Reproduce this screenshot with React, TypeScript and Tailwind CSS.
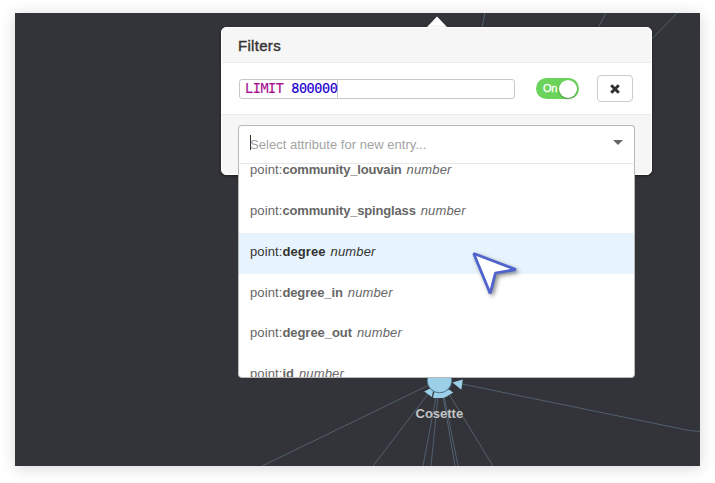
import { ReactNode } from "react";

type Attribute = { name: string; tracking: string; selected?: boolean };

const attributes: Attribute[] = [
  { name: "community_louvain", tracking: "tracking-[-0.17px]" },
  { name: "community_spinglass", tracking: "tracking-[-0.17px]" },
  { name: "degree", tracking: "tracking-[0.08px]", selected: true },
  { name: "degree_in", tracking: "tracking-[-0.12px]" },
  { name: "degree_out", tracking: "tracking-[-0.05px]" },
  { name: "id", tracking: "tracking-normal" },
];

function GraphCanvas() {
  return (
    <svg className="absolute inset-0" width="685" height="453" viewBox="15 13 685 453" fill="none">
      <g stroke="#51606f" strokeWidth="1">
        <path d="M427 386 L262 466" />
        <path d="M428 394 L373 466" />
        <path d="M436 397 L423 466" />
        <path d="M438 397 L431 466" />
        <path d="M443 396 L455 466" />
        <path d="M444 396 L458 466" />
        <path d="M449 394 L493 466" />
        <path d="M462 384 L682 429 Q690 431 700 431.5" />
        <path d="M485 13 L482 28" />
        <path d="M606 13 L598 28" />
        <path d="M677 13 L651 40" />
      </g>
      <g fill="#9bd0e8">
        <path d="M452.5 382.5 L462.8 379.5 L461.3 389.8 Z" />
        <path d="M424.2 391.5 L431 388 L434 391 L432 397 Z" />
        <path d="M432.5 397 L435 391 L445 391 L448 396 L443 398 L434 398 Z" />
        <path d="M444 391 L449 389.5 L453.2 392.5 L446.5 396.5 Z" />
        <path d="M433.5 391 L432.5 397" stroke="#333439" />
        <circle cx="439.5" cy="380.5" r="12.3" stroke="#4a7185" strokeWidth="1" />
      </g>
    </svg>
  );
}

function Row({ children }: { children: ReactNode }) {
  return (
    <div className="flex h-[53px] items-center border-y border-[#ebebeb] bg-white pl-[17px]">{children}</div>
  );
}

function Toggle() {
  return (
    <div className="ml-[21px] flex h-[21px] w-[43px] items-center justify-between rounded-full bg-[#69d35a] pr-[2px] pl-[7px]">
      <span className="text-[11px] tracking-[-0.2px] text-white [-webkit-text-stroke:0.3px_white]">On</span>
      <span className="size-[18px] shrink-0 rounded-full bg-white shadow-[0_1px_2px_rgba(0,0,0,0.35)]" />
    </div>
  );
}

function AttributeSelect() {
  return (
    <div className="relative h-[38px] w-[397px] rounded-t-[4px] border border-b-0 border-[#b8b8b8] bg-white">
      <div className="flex h-full items-center justify-between pr-[11px] pl-[11px]">
        <span className="flex items-center text-[13px] text-[#a3a3a3]">
          <span className="-mt-[4px] -mr-px h-[15px] w-px bg-[#333]" />
          <span className="tracking-[0.03px]">Select attribute for new entry...</span>
        </span>
        <span className="-mt-[5px] border-x-[5.5px] border-t-[5.5px] border-x-transparent border-t-[#666]" />
      </div>
      <div className="absolute top-[37px] -left-px h-[215px] w-[397px] overflow-hidden rounded-b-[4px] border border-[#b8b8b8] border-t-[#e7e7e7] bg-white">
        <ul className="-mt-[12.4px]">
          {attributes.map((a) => (
            <li
              key={a.name}
              className={
                "flex h-[40.8px] items-center pb-[4px] pl-[11px] text-[13px] whitespace-pre " +
                (a.selected ? "bg-[#e8f4fd] text-[#333]" : "text-[#666]")
              }
            >
              <span className="tracking-[0.1px]">point:</span>
              <b className={a.tracking}>{a.name}</b>
              <i className="ml-[5px] tracking-[0.15px]">number</i>
            </li>
          ))}
        </ul>
      </div>
    </div>
  );
}

export default function App() {
  return (
    <div className="h-[483px] w-[715px] overflow-hidden bg-white pt-[13px] pl-[15px] font-['Liberation_Sans',Arial,sans-serif]">
      <div className="relative h-[453px] w-[685px] bg-[#333439] shadow-[0_2px_14px_rgba(0,0,0,0.16)]">
        <GraphCanvas />
        <span className="absolute top-[393px] left-[400.5px] text-[13px] leading-[15px] font-bold text-[#c4c4c4]">
          Cosette
        </span>
        <svg className="absolute top-[3px] left-[411px]" width="22" height="12">
          <path d="M0 12 L11 0.5 L22 12 Z" fill="#fff" />
        </svg>
        <section className="absolute top-[14px] left-[206px] h-[148px] w-[431px] rounded-[5px] border border-white bg-[#f6f6f6] shadow-[0_1px_3px_rgba(0,0,0,0.45)]">
          <header className="flex h-[34px] items-center pl-[16px] text-[15px] text-[#333] [-webkit-text-stroke:0.4px_#333]">
            <span className="mt-[2px] tracking-[0.3px]">Filters</span>
          </header>
          <Row>
            <div className="flex h-[20px] w-[276px] items-center rounded-[3px] border border-[#c8c8c8] pl-[5px]">
              <code className="flex h-[18px] items-center border-r border-[#ccc] font-['DejaVu_Sans_Mono',monospace] text-[13.5px] tracking-[-0.43px] whitespace-pre">
                <span className="text-[#a90d91] [-webkit-text-stroke:0.15px_#a90d91]">LIMIT </span>
                <span className="text-[#1c00cf] [-webkit-text-stroke:0.15px_#1c00cf]">800000</span>
              </code>
            </div>
            <Toggle />
            <button className="ml-[18px] flex h-[27px] w-[36px] items-center justify-center rounded-[4px] border border-[#ccc] bg-white">
              <svg width="10" height="10" viewBox="0 0 10 10" stroke="#303030" strokeWidth="3">
                <path d="M1.2 1.2 L8.8 8.8 M8.8 1.2 L1.2 8.8" />
              </svg>
            </button>
          </Row>
          <footer className="pt-[10px] pl-[16px]">
            <AttributeSelect />
          </footer>
        </section>
        <svg
          className="absolute top-[232px] left-[450px] drop-shadow-[2px_2px_2px_rgba(0,0,0,0.45)]"
          width="60"
          height="60"
          viewBox="465 245 60 60"
        >
          <path
            d="M473.7 253.5 L515.8 269.5 L495.4 273.2 L490.2 293.5 Z"
            fill="#fff"
            stroke="#5063cc"
            strokeWidth="2.8"
            strokeLinejoin="bevel"
          />
        </svg>
      </div>
    </div>
  );
}
